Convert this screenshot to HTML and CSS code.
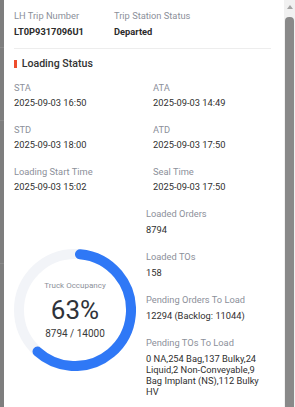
FILE: index.html
```html
<!DOCTYPE html>
<html>
<head>
<meta charset="utf-8">
<link rel="stylesheet" href="styles.css">
</head>
<body>
<div class="shade"><span class="shade-line l1"></span><span class="shade-line l2"></span><span class="shade-line l3"></span></div>
<main class="panel">
  <div class="trip">
    <div class="field"><div class="label">LH Trip Number</div><div class="value strong">LT0P9317096U1</div></div>
    <div class="field"><div class="label">Trip Station Status</div><div class="value strong">Departed</div></div>
  </div>
  <div class="divider"></div>
  <h2 class="title"><span class="title-bar"></span>Loading Status</h2>
  <div class="times">
    <div class="field"><div class="label">STA</div><div class="value">2025-09-03 16:50</div></div>
    <div class="field"><div class="label">ATA</div><div class="value">2025-09-03 14:49</div></div>
    <div class="field"><div class="label">STD</div><div class="value">2025-09-03 18:00</div></div>
    <div class="field"><div class="label">ATD</div><div class="value">2025-09-03 17:50</div></div>
    <div class="field"><div class="label">Loading Start Time</div><div class="value">2025-09-03 15:02</div></div>
    <div class="field"><div class="label">Seal Time</div><div class="value">2025-09-03 17:50</div></div>
  </div>
  <div class="loading">
    <div class="gauge-col">
      <div class="gauge">
        <svg class="gauge-svg" width="122" height="122" viewBox="0 0 122 122">
          <circle cx="61" cy="61" r="56" fill="none" stroke="#f2f4f8" stroke-width="10"/>
          <circle cx="61" cy="61" r="56" fill="none" stroke="#2f78f6" stroke-width="10" stroke-linecap="round" stroke-dasharray="211.7 400" transform="rotate(-84.9 61 61)"/>
        </svg>
        <div class="gauge-text">
          <div class="gauge-label">Truck Occupancy</div>
          <div class="gauge-pct">63%</div>
          <div class="gauge-count">8794 / 14000</div>
        </div>
      </div>
    </div>
    <div class="stats">
      <div class="stat"><div class="label">Loaded Orders</div><div class="stat-value">8794</div></div>
      <div class="stat"><div class="label">Loaded TOs</div><div class="stat-value">158</div></div>
      <div class="stat"><div class="label">Pending Orders To Load</div><div class="stat-value">12294 (Backlog: 11044)</div></div>
      <div class="stat"><div class="label">Pending TOs To Load</div><div class="stat-value">0 NA,254 Bag,137 Bulky,24 Liquid,2 Non-Conveyable,9 Bag Implant (NS),112 Bulky HV</div></div>
    </div>
  </div>
</main>
<div class="scrollbar"><span class="scroll-arrow"></span><span class="scroll-thumb"></span></div>
</body>
</html>
```

FILE: styles.css
```css
html, body {
  margin: 0;
  padding: 0;
}
body {
  display: flex;
  height: 407px;
  overflow: hidden;
  background: #7e7e7e;
  font-family: Roboto, "Liberation Sans", sans-serif;
}
.shade {
  width: 4px;
  flex: none;
  display: flex;
  flex-direction: column;
}
.shade-line {
  display: block;
  height: 1px;
  background: #8a8a8a;
}
.l1 { margin-top: 47px; }
.l2 { margin-top: 72px; }
.l3 { margin-top: 142px; }
.panel {
  width: 280px;
  flex: none;
  box-sizing: border-box;
  background: #fff;
  padding: 10px 13px 0 10px;
  overflow: hidden;
}
.trip {
  display: grid;
  grid-template-columns: 100px 1fr;
}
.label {
  font-size: 9.3px;
  line-height: 12px;
  color: #8c909a;
  white-space: nowrap;
}
.value {
  font-size: 9.3px;
  line-height: 12px;
  color: #303030;
  margin-top: 3px;
  white-space: nowrap;
}
.value.strong {
  font-weight: 700;
  margin-top: 3.6px;
  color: #2b2b2b;
}
.divider {
  height: 1px;
  background: #ededed;
  margin-top: 10px;
}
.title {
  display: flex;
  align-items: center;
  margin: 8.3px 0 0;
  font-size: 10.6px;
  line-height: 14px;
  font-weight: 500;
  color: #333;
}
.title-bar {
  width: 3px;
  height: 8px;
  background: #ee4d2d;
  margin-right: 4.7px;
}
.times {
  display: grid;
  grid-template-columns: 139px 1fr;
  row-gap: 15px;
  margin-top: 11.4px;
}
.loading {
  display: flex;
  align-items: flex-start;
  margin-top: 15px;
}
.gauge-col {
  width: 132px;
  flex: none;
  padding-top: 40.6px;
}
.gauge {
  position: relative;
  width: 122px;
  height: 122px;
}
.gauge-svg {
  display: block;
}
.gauge-text {
  position: absolute;
  inset: 0;
  display: flex;
  flex-direction: column;
  align-items: center;
  justify-content: center;
  padding-top: 1px;
}
.gauge-label {
  font-size: 8px;
  line-height: 10px;
  color: #8c909a;
}
.gauge-pct {
  font-size: 26px;
  line-height: 30px;
  color: #2f333a;
  margin-top: 4.6px;
}
.gauge-count {
  font-size: 10px;
  line-height: 12px;
  color: #3a3a3a;
  margin-top: 3px;
}
.stats {
  width: 116px;
  display: flex;
  flex-direction: column;
  gap: 16.4px;
}
.stat-value {
  font-size: 9.3px;
  line-height: 11px;
  color: #303030;
  margin-top: 3.6px;
}
.scrollbar {
  width: 11px;
  flex: none;
  background: #f1f1f1;
  display: flex;
  flex-direction: column;
  align-items: center;
}
.scroll-arrow {
  width: 0;
  height: 0;
  margin-top: 5px;
  margin-left: 1px;
  border-left: 3px solid transparent;
  border-right: 3px solid transparent;
  border-bottom: 4px solid #a3a3a3;
}
.scroll-thumb {
  width: 9px;
  flex: 1;
  margin-top: 8px;
  background: #898989;
  border-radius: 4px 4px 0 0;
}
```
